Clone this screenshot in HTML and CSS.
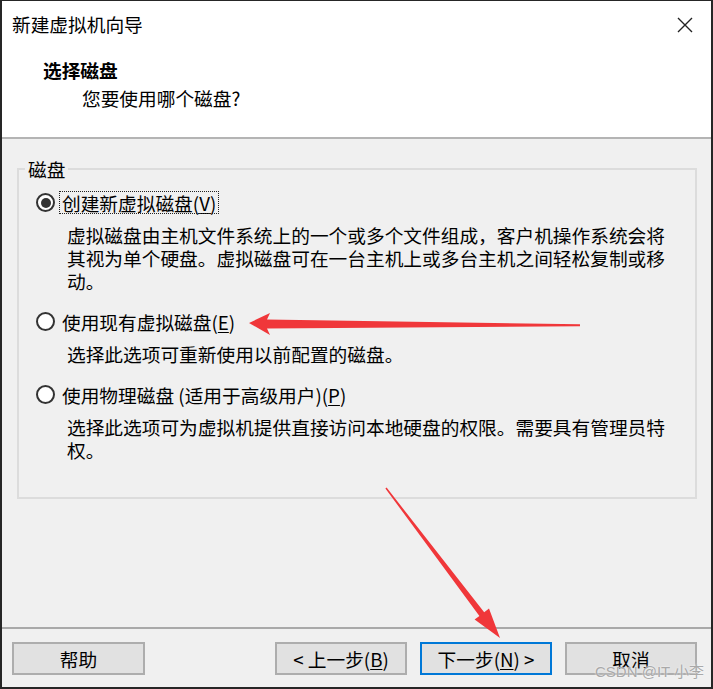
FILE: index.html
```html
<!DOCTYPE html>
<html lang="zh-CN">
<head>
<meta charset="utf-8">
<title>新建虚拟机向导</title>
<link rel="stylesheet" href="styles.css">
</head>
<body>
<div class="window">
  <div class="header">
    <div class="titlebar">
      <span class="title">新建虚拟机向导</span>
      <svg class="close" width="16" height="16" viewBox="0 0 16 16"><path d="M1 1 L15 15 M15 1 L1 15" stroke="#222" stroke-width="1.4" fill="none"/></svg>
    </div>
    <div class="heading">选择磁盘</div>
    <div class="subheading">您要使用哪个磁盘?</div>
  </div>
  <div class="content">
    <fieldset class="group">
      <legend class="group-title">磁盘</legend>
      <div class="option">
        <div class="radio-row"><span class="radio checked"><span class="dot"></span></span><span class="label focused">创建新虚拟磁盘(<u>V</u>)</span></div>
        <p class="desc">虚拟磁盘由主机文件系统上的一个或多个文件组成，客户机操作系统会将<br>其视为单个硬盘。虚拟磁盘可在一台主机上或多台主机之间轻松复制或移<br>动。</p>
      </div>
      <div class="option">
        <div class="radio-row"><span class="radio"></span><span class="label">使用现有虚拟磁盘(<u>E</u>)</span></div>
        <p class="desc">选择此选项可重新使用以前配置的磁盘。</p>
      </div>
      <div class="option">
        <div class="radio-row"><span class="radio"></span><span class="label">使用物理磁盘 (适用于高级用户)(<u>P</u>)</span></div>
        <p class="desc">选择此选项可为虚拟机提供直接访问本地硬盘的权限。需要具有管理员特<br>权。</p>
      </div>
    </fieldset>
  </div>
  <div class="footer">
    <button class="btn help">帮助</button>
    <div class="spacer"></div>
    <button class="btn">&lt; 上一步(<u>B</u>)</button>
    <button class="btn primary">下一步(<u>N</u>) &gt;</button>
    <button class="btn">取消</button>
  </div>
  <svg class="arrows" width="713" height="689" viewBox="0 0 713 689">
    <polygon fill="#f0373a" points="249,323 270,313 267,319.5 580,324.3 580,326.3 267,328.5 270,335"/>
    <polygon fill="#f0373a" points="500,638 474.6,619.6 479.4,615.9 385.4,488.5 386.6,487.6 484.2,612.3 489,608.6"/>
  </svg>
  <div class="watermark">CSDN @IT 小李</div>
</div>
</body>
</html>
```
FILE: styles.css
```css
* { box-sizing: border-box; }
html, body { margin: 0; padding: 0; background: #fff; }
body {
  font-family: "Noto Sans CJK SC", "Noto Sans", sans-serif;
  font-size: 18.7px;
  color: #000;
}
.window {
  position: relative;
  width: 713px;
  height: 689px;
  border-style: solid;
  border-color: #262626;
  border-width: 1px 2px 2px 2px;
  display: flex;
  flex-direction: column;
  overflow: hidden;
}
.header {
  height: 138px;
  background: #fff;
  border-bottom: 2px solid #b4b4b4;
  flex: none;
}
.titlebar {
  height: 46px;
  display: flex;
  align-items: center;
  justify-content: space-between;
  padding: 0 18px 0 10px;
}
.title { line-height: 26px; }
.close { display: block; margin-top: 2px; }
.heading {
  margin-top: 9px;
  padding-left: 41px;
  font-weight: bold;
  line-height: 28px;
}
.subheading {
  padding-left: 80px;
  line-height: 28px;
}
.content {
  flex: 1;
  background: #f0f0f0;
  border-bottom: 2px solid #a9a9a9;
  padding-top: 19px;
}
.group {
  margin: 0 14px 0 15px;
  border: 2px solid #dcdcdc;
  padding: 11px 10px 36px 17px;
  min-width: 0;
}
.group-title {
  padding: 0 3px;
  margin-left: -11px;
  line-height: 22px;
}
.option + .option { margin-top: 18px; }
.radio-row {
  display: flex;
  align-items: center;
  height: 23px;
  gap: 5px;
}
.radio {
  width: 19px;
  height: 19px;
  border: 2px solid #333;
  border-radius: 50%;
  background: #fff;
  display: flex;
  align-items: center;
  justify-content: center;
  flex: none;
}
.dot {
  width: 10px;
  height: 10px;
  border-radius: 50%;
  background: #333;
}
.label {
  padding: 0 2px;
  line-height: 21px;
  white-space: nowrap;
}
.label.focused { outline: 1px dotted #222; outline-offset: 0; }
u { text-underline-offset: 2px; }
.desc {
  margin: 9px 0 0 31px;
  line-height: 23px;
  white-space: nowrap;
}
.footer {
  height: 58px;
  flex: none;
  background: #f0f0f0;
  display: flex;
  align-items: flex-start;
  padding: 13px 14px 0 10px;
  gap: 13px;
}
.spacer { flex: 1; }
.btn {
  width: 132px;
  height: 33px;
  background: #e1e1e1;
  border: 2px solid #adadad;
  font-family: inherit;
  font-size: 18.7px;
  color: #000;
  padding: 0;
  line-height: 26px;
}
.btn.help { width: 133px; }
.btn.primary { border-color: #0078d7; }
.arrows {
  position: absolute;
  top: -1px;
  left: -2px;
  pointer-events: none;
}
.watermark {
  position: absolute;
  left: 593px;
  top: 661px;
  font-family: "Liberation Sans", "Noto Sans CJK SC", sans-serif;
  font-size: 15px;
  line-height: 20px;
  color: #a9a9a9;
  text-shadow: 0 0 2px #fff;
  pointer-events: none;
}
```
